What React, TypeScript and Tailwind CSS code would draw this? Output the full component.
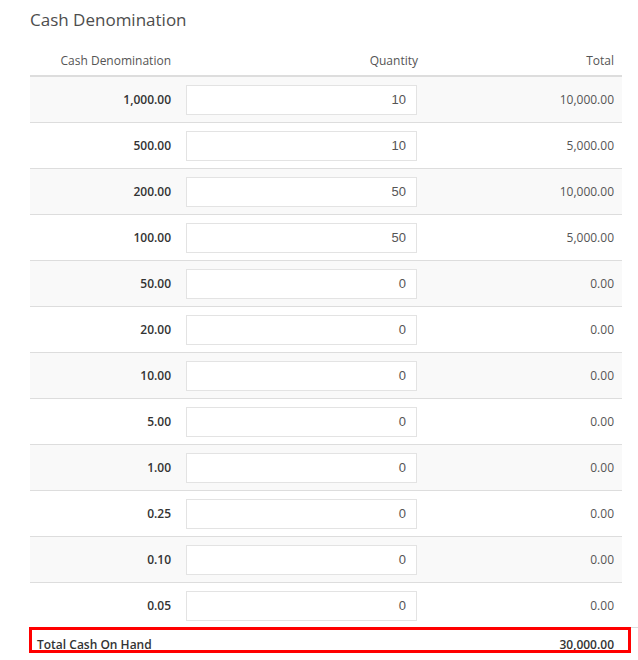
import React from "react";

const rows: [string, string, string][] = [
  ["1,000.00", "10", "10,000.00"],
  ["500.00", "10", "5,000.00"],
  ["200.00", "50", "10,000.00"],
  ["100.00", "50", "5,000.00"],
  ["50.00", "0", "0.00"],
  ["20.00", "0", "0.00"],
  ["10.00", "0", "0.00"],
  ["5.00", "0", "0.00"],
  ["1.00", "0", "0.00"],
  ["0.25", "0", "0.00"],
  ["0.10", "0", "0.00"],
  ["0.05", "0", "0.00"],
];

export default function App() {
  return (
    <div
      className="w-[638px] h-[660px] overflow-hidden bg-white pl-[30px]"
      style={{ fontFamily: '"Open Sans", "Liberation Sans", sans-serif' }}
    >
      <div className="h-[44px] pt-[9px] text-[17px] leading-[22px] text-[#4d4d4d]">
        Cash Denomination
      </div>
      <div className="w-[592px]">
        <div className="grid grid-cols-[149px_246px_197px] h-[33px] border-b-2 border-[#dddddd] text-[12px] leading-[16px] text-[#555] pt-[9px]">
          <div className="text-right pr-[8px]">Cash Denomination</div>
          <div className="text-right pr-[7px]">Quantity</div>
          <div className="text-right pr-[8px]">Total</div>
        </div>
        {rows.map(([d, q, t], i) => (
          <div
            key={d}
            className={
              "grid grid-cols-[149px_246px_197px] items-center text-[12px] " +
              (i === 0 ? "h-[45px] " : "h-[46px] border-t border-[#dddddd] ") +
              (i % 2 === 0 ? "bg-[#f9f9f9]" : "bg-white")
            }
          >
            <div className="text-right pr-[8px] font-semibold text-[#333]">{d}</div>
            <div className="pl-[7px] pr-[8px]">
              <input
                defaultValue={q}
                className="block w-[231px] h-[30px] border border-[#e3e3e3] bg-white text-right pr-[10px] text-[13px] text-[#555] outline-none"
                style={{ fontFamily: '"Liberation Sans", Arial, sans-serif' }}
              />
            </div>
            <div className="text-right pr-[8px] text-[#555]">{t}</div>
          </div>
        ))}
      </div>
      <div className="relative -mt-[1px] -ml-[1px] w-[602px]">
        <div className="h-[26px] border-[3px] border-[#ff0000] flex justify-between pl-[5px] pr-[14px] pt-[8px] text-[12px] leading-[14px] font-semibold text-[#333] overflow-hidden">
          <span>Total Cash On Hand</span>
          <span>30,000.00</span>
        </div>
        <div className="absolute left-[602px] top-0 w-[8px] h-px bg-[#dddddd]" />
      </div>
    </div>
  );
}
